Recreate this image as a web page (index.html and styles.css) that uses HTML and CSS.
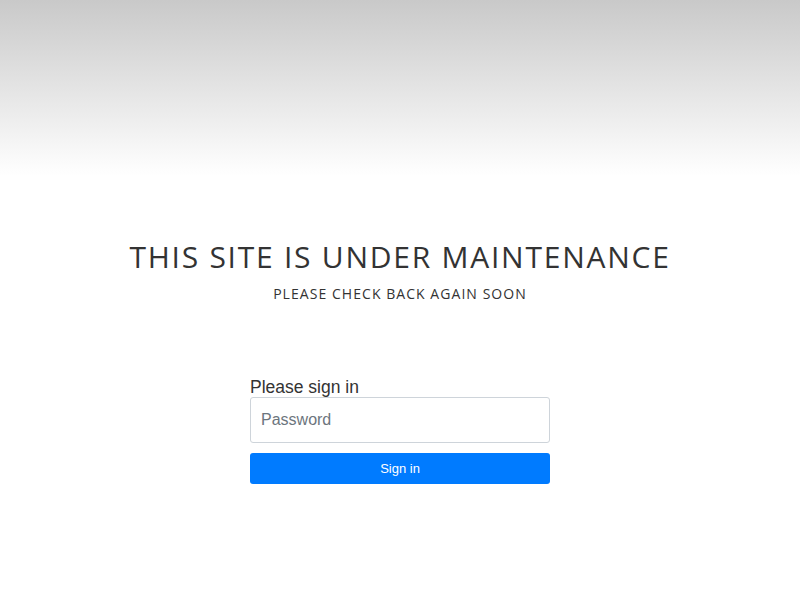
FILE: index.html
```html
<!DOCTYPE html>
<html lang="en">
<head>
<meta charset="utf-8">
<title>Maintenance</title>
<link rel="stylesheet" href="styles.css">
</head>
<body>
<div class="top-fade"></div>
<main class="content">
  <h1 class="title">THIS SITE IS UNDER MAINTENANCE</h1>
  <p class="subtitle">PLEASE CHECK BACK AGAIN SOON</p>
  <form class="signin">
    <label class="signin-label" for="pw">Please sign in</label>
    <input class="signin-input" id="pw" type="password" placeholder="Password">
    <button class="signin-btn" type="button">Sign in</button>
  </form>
</main>
</body>
</html>
```
FILE: styles.css
```css
html, body {
  margin: 0;
  padding: 0;
  background: #fff;
}
body {
  font-family: "Liberation Sans", Arial, sans-serif;
  color: #333;
}
.top-fade {
  height: 176px;
  background: linear-gradient(to bottom, #c9c9c9 0%, #e4e4e4 50%, #ffffff 100%);
}
.content {
  display: flex;
  flex-direction: column;
  align-items: center;
}
.title {
  margin: 61px 0 0;
  font-family: "Open Sans", sans-serif;
  font-weight: 400;
  font-size: 30px;
  line-height: 40px;
  letter-spacing: 1.75px;
  color: #333;
}
.subtitle {
  margin: 5px 0 0;
  font-family: "Open Sans", sans-serif;
  font-size: 14px;
  line-height: 24px;
  letter-spacing: 1.05px;
  color: #333;
}
.signin {
  width: 300px;
  margin-top: 71px;
  display: flex;
  flex-direction: column;
}
.signin-label {
  font-size: 17.5px;
  line-height: 20px;
  color: #333;
}
.signin-input {
  box-sizing: border-box;
  height: 46px;
  margin: 0;
  padding: 0 10px;
  border: 1px solid #ced4da;
  border-radius: 3px;
  font-family: "Liberation Sans", Arial, sans-serif;
  font-size: 16px;
  color: #495057;
  outline: none;
}
.signin-input::placeholder {
  color: #6c757d;
}
.signin-btn {
  margin-top: 10px;
  height: 31px;
  border: none;
  border-radius: 3px;
  background: #007bff;
  color: #fff;
  font-family: "Liberation Sans", Arial, sans-serif;
  font-size: 13px;
}
```
